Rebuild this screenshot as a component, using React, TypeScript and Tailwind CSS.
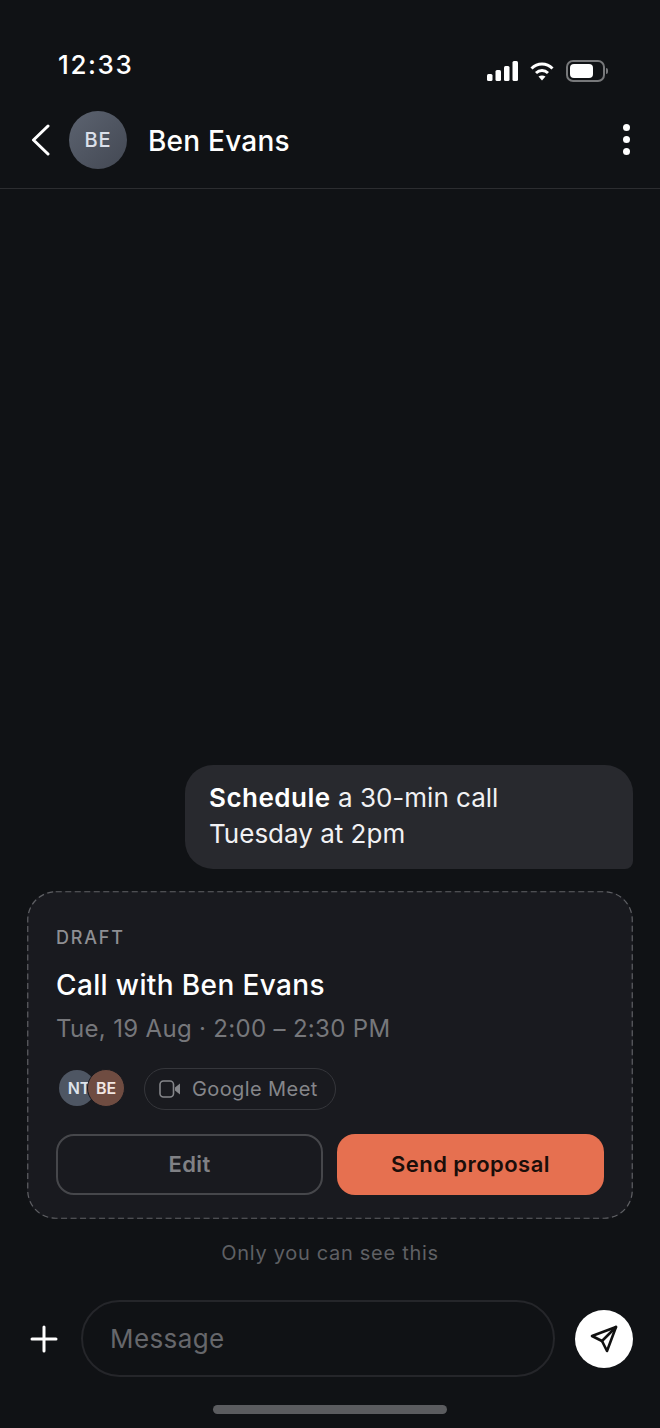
const StatusIcons = () => (
  <div className="flex items-center">
    <svg width="32" height="20" viewBox="0 0 32 20" fill="#fff">
      <rect x="0" y="13" width="5.500" height="7" rx="1.500" />
      <rect x="8.500" y="9" width="5.500" height="11" rx="1.500" />
      <rect x="17" y="5" width="5.500" height="15" rx="1.500" />
      <rect x="25.500" y="0" width="5.500" height="20" rx="1.500" />
    </svg>
    <svg className="ml-[11px]" width="24" height="20" viewBox="0 0 24 20" fill="none" stroke="#fff" strokeWidth="3">
      <path d="M1.500 7.500C7.500 1.500 16.500 1.500 22.500 7.500" />
      <path d="M6 12C9.500 8.800 14.500 8.800 18 12" />
      <path d="M12 19.500L8.500 15.500C10.500 14 13.500 14 15.500 15.500Z" fill="#fff" stroke="none" />
    </svg>
    <div className="ml-[12px] flex items-center gap-[1px]">
      <div className="flex h-[22px] w-[39px] items-center rounded-[7px] border-2 border-[#77787a] p-[2px]">
        <div className="h-[14px] w-[23px] rounded-[4px] bg-white" />
      </div>
      <div className="h-[6px] w-[2px] rounded-r-sm bg-[#77787a]" />
    </div>
  </div>
);

const App = () => {
  return (
    <div className="flex h-[1428px] w-[660px] flex-col bg-[#101215] font-['Inter',sans-serif] text-white">
      {/* status bar */}
      <div className="flex h-[92px] items-start justify-between pl-[58px] pr-[52px]">
        <div className="mt-[48px] text-[26px] leading-[34px] font-medium tracking-[1.6px]">12:33</div>
        <div className="mt-[60px]">
          <StatusIcons />
        </div>
      </div>

      {/* header */}
      <div className="flex h-[97px] items-center border-b border-[#2c2d30] pb-[1px] pl-[30px] pr-[30px]">
        <svg width="22" height="32" viewBox="0 0 22 32" fill="none" stroke="#fff" strokeWidth="3" strokeLinecap="round" strokeLinejoin="round">
          <path d="M18 2L3.500 16L18 30" />
        </svg>
        <div className="ml-[17px] flex h-[58px] w-[58px] items-center justify-center rounded-full bg-linear-to-br from-[#5c6370] to-[#434853] text-[20px] font-medium tracking-[1px] text-[#dbe0ea]">
          BE
        </div>
        <div className="ml-[21px] mt-[2px] text-[28px] leading-[36px] font-medium tracking-[0.22px]">Ben Evans</div>
        <div className="ml-auto flex flex-col gap-[5px]">
          <div className="h-[7px] w-[7px] rounded-full bg-white" />
          <div className="h-[7px] w-[7px] rounded-full bg-white" />
          <div className="h-[7px] w-[7px] rounded-full bg-white" />
        </div>
      </div>

      {/* chat */}
      <div className="flex flex-1 flex-col justify-end px-[27px]">
        <div className="self-end">
          <div className="h-[104px] w-[448px] rounded-[28px] rounded-br-[8px] bg-[#28292e] px-[24px] pt-[15px] text-[26px] leading-[36px] text-[#f1f1f3]">
            <span className="font-semibold tracking-[0.5px] text-white">Schedule</span> a 30-min call
            <br />
            Tuesday at 2pm
          </div>
        </div>

        <div className="relative mt-[22px] h-[328px] rounded-[28px] bg-[#191a1f] px-[29px] pt-[35px]">
          {/* dashed outline, css dashes come out too short */}
          <svg className="absolute inset-0" width="606" height="328" fill="none">
            <rect x="0.750" y="0.750" width="604.500" height="326.500" rx="28" stroke="#5f6064" strokeWidth="1.200" strokeDasharray="6 3.500" />
          </svg>
          <div className="text-[18px] leading-[24px] font-medium tracking-[1.8px] text-[#8e8f93]">DRAFT</div>
          <div className="mt-[17px] text-[28px] leading-[36px] font-medium tracking-[0.37px]">Call with Ben Evans</div>
          <div className="mt-[10px] text-[24px] leading-[32px] tracking-[0.32px] text-[#76777b]">Tue, 19 Aug · 2:00 – 2:30 PM</div>

          <div className="mt-[23px] flex items-center">
            <div className="ml-[3px] flex">
              <div className="flex h-[36px] w-[36px] items-center justify-center rounded-full bg-[#4e5663] pl-[4px] text-[16px] font-semibold text-[#dfe3ea]">
                NT
              </div>
              <div className="-ml-[8px] flex h-[38px] w-[38px] -translate-y-[1px] items-center justify-center rounded-full border border-[#191a1f] bg-[#6f4c41] text-[16px] font-semibold text-[#f1e6e2]">
                BE
              </div>
            </div>
            <div className="ml-[19px] flex h-[42px] w-[192px] items-center rounded-full border border-[#35363b] pl-[14px]">
              <svg width="22" height="18" viewBox="0 0 22 18" fill="none">
                <rect x="1" y="1" width="13.500" height="16" rx="3.500" stroke="#85868a" strokeWidth="1.600" />
                <path d="M21 3.500V14.500L16 10.500V7.500Z" fill="#85868a" />
              </svg>
              <span className="ml-[11px] text-[20px] tracking-[0.4px] text-[#85868a]">Google Meet</span>
            </div>
          </div>

          <div className="mt-[24px] flex justify-between">
            <div className="flex h-[61px] w-[267px] items-center justify-center rounded-[18px] border-2 border-[#46474b] text-[22px] font-semibold tracking-[0.4px] text-[#808185]">
              Edit
            </div>
            <div className="flex h-[61px] w-[267px] items-center justify-center rounded-[18px] bg-[#e67050] text-[22px] font-semibold tracking-[0.45px] text-[#1a0e0a]">
              Send proposal
            </div>
          </div>
        </div>

        <div className="mt-[21px] text-center text-[20px] leading-[26px] tracking-[0.7px] text-[#5f6064]">Only you can see this</div>
      </div>

      {/* input row */}
      <div className="mt-[34px] flex items-center pl-[30px] pr-[27px]">
        <svg width="28" height="28" viewBox="0 0 28 28" stroke="#fff" strokeWidth="3" strokeLinecap="round">
          <path d="M14 2V26M2 14H26" />
        </svg>
        <div className="ml-[23px] flex h-[77px] w-[474px] items-center rounded-full border-2 border-[#25262a] pl-[27px] text-[26px] tracking-[0.4px] text-[#66676b]">
          Message
        </div>
        <div className="ml-auto flex h-[58px] w-[58px] items-center justify-center rounded-full bg-white">
          <svg width="30" height="30" viewBox="0 0 30 30" fill="none" stroke="#111" strokeWidth="2.600" strokeLinejoin="round" strokeLinecap="round">
            <path d="M27 3L3 12L13 17L18 27Z" />
            <path d="M13 17L27 3" />
          </svg>
        </div>
      </div>

      {/* home bar */}
      <div className="flex h-[51px] justify-center pt-[28px]">
        <div className="h-[9px] w-[234px] rounded-full bg-[#5b5c5f]" />
      </div>
    </div>
  );
};

export default App;
